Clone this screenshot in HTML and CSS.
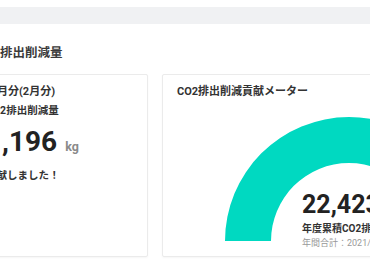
FILE: index.html
```html
<!DOCTYPE html>
<html lang="ja">
<head>
<meta charset="utf-8">
<title>CO2排出削減量</title>
<link rel="stylesheet" href="styles.css">
</head>
<body>
<div class="page">
  <div class="topbar"></div>
  <h2 class="section-title">CO2排出削減量</h2>
  <div class="cards">
    <section class="card card-month">
      <div class="month">今月分(2月分)</div>
      <div class="label">CO2排出削減量</div>
      <div class="amount"><span class="num">1,196</span><span class="unit">kg</span></div>
      <div class="message">貢献しました！</div>
    </section>
    <section class="card card-meter">
      <div class="card-title">CO2排出削減貢献メーター</div>
      <div class="gauge">
        <svg class="gauge-svg" width="340" height="156" viewBox="0 0 340 156">
          <path d="M48 141 A124 124 0 0 1 296 141 L250 141 A78 78 0 0 0 94 141 Z" fill="#00d9c1"/>
        </svg>
        <div class="gauge-label">
          <div class="gauge-num">22,423</div>
          <div class="gauge-sub">年度累積CO2排出削減量</div>
          <div class="gauge-note">年間合計：2021/4 ~ 2022/3</div>
        </div>
      </div>
    </section>
  </div>
</div>
</body>
</html>
```

FILE: styles.css
```css
html, body {
  margin: 0;
  padding: 0;
  overflow: hidden;
  background: #ffffff;
}
body {
  font-family: Roboto, "Noto Sans CJK JP", sans-serif;
  color: #333333;
  width: 370px;
  height: 270px;
}
.page {
  margin-left: -30px;
  width: 560px;
  padding-top: 7px;
}
.topbar {
  height: 17px;
  background: #f0f1f3;
}
.section-title {
  margin: 19px 0 11px 0;
  padding-left: 6px;
  font-size: 12.5px;
  line-height: 20px;
  font-weight: 700;
  color: #3a3a3a;
}
.cards {
  display: flex;
  gap: 14px;
  align-items: stretch;
}
.card {
  box-sizing: border-box;
  height: 183px;
  border: 1px solid #ebebeb;
  border-radius: 2px;
  box-shadow: 0 1px 2px rgba(0, 0, 0, 0.04);
  background: #fff;
  position: relative;
  overflow: hidden;
}
.card-month {
  width: 178px;
  padding: 9px 15px 0 15px;
}
.month {
  font-size: 11px;
  line-height: 16px;
  font-weight: 700;
}
.label {
  margin-top: 3px;
  font-size: 10.5px;
  line-height: 16px;
  font-weight: 700;
}
.amount {
  margin-top: 6px;
  line-height: 34px;
  white-space: nowrap;
}
.num {
  font-size: 28px;
  font-weight: 700;
  color: #222;
}
.unit {
  margin-left: 8px;
  font-size: 12.5px;
  font-weight: 700;
  color: #8a8a8a;
}
.message {
  margin-top: 4px;
  font-size: 10.5px;
  line-height: 16px;
  font-weight: 700;
}
.card-meter {
  width: 340px;
  padding: 9px 14px 0 14px;
}
.card-title {
  font-size: 11px;
  line-height: 16px;
  font-weight: 700;
  white-space: nowrap;
}
.gauge {
  position: relative;
  height: 156px;
}
.gauge-svg {
  display: block;
}
.gauge-label {
  position: absolute;
  left: 125px;
  top: 91px;
  white-space: nowrap;
}
.gauge-num {
  font-size: 25px;
  line-height: 28px;
  font-weight: 700;
  color: #222;
}
.gauge-sub {
  margin-top: 3px;
  font-size: 10px;
  line-height: 14px;
  font-weight: 700;
  color: #333;
}
.gauge-note {
  margin-top: 1px;
  font-size: 9px;
  line-height: 13px;
  color: #999;
}
```
